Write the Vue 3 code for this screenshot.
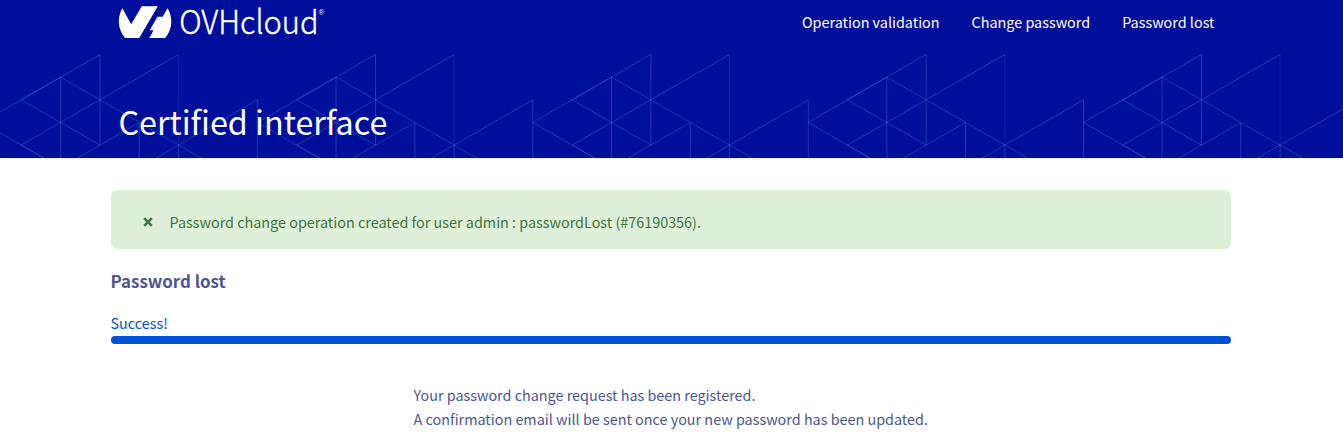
<script setup>
const links = ['Operation validation', 'Change password', 'Password lost']

const U = 39.35
const pt = ([c, r]) => `${(c * U).toFixed(2)},${(54.5 + r * 22.65).toFixed(2)}`
const path = (segments) => segments.map(([a, b]) => `M${pt(a)}L${pt(b)}`).join('')

const lines = path([
  [[0, 3], [3, 0]],
  [[3, 0], [3, 4]],
  [[2, 1], [2, 5]],
  [[2, 1], [6, 5]],
  [[1, 2], [3, 4]],
  [[1, 4], [5, 0]],
  [[0, 3], [2, 5]],
  [[4, 3], [4, 5]],
  [[4, 3], [2, 5]],
  [[4, 5], [7, 2]],
  [[5, 4], [5, 5]],
  [[7, 2], [7, 5]]
])
const bright = path([[[1, 2], [2, 1]], [[1, 4], [2, 5]]])
const faint = path([[[5, 0], [5, 4]]])
const tiles = [-18.1, 257.4, 532.8, 808.1, 1083.4, 1358.8]
</script>

<template>
  <div class="page">
    <header class="hero">
      <svg class="pattern" width="1343" height="158" viewBox="0 0 1343 158" fill="none" aria-hidden="true">
        <g v-for="x in tiles" :key="x" :transform="`translate(${x} 0)`">
          <path class="line" :d="lines" />
          <path class="bright" :d="bright" />
          <path class="faint" :d="faint" />
        </g>
      </svg>
      <div class="topbar">
        <svg class="logo" width="210" height="36" viewBox="116 4 210 36">
          <path fill="#fff" d="M122.300 8.300 131.200 24.300 141.800 6.200H157.800L139.200 38H125C117.500 29 117.200 17.500 122.300 8.300Z" />
          <path fill="#fff" d="M167.600 8.300C173 17.500 172.800 29 165.200 38H149.300L153.600 30.200H149.800L157.400 16.800H162.700L167.600 8.300Z" />
          <text class="brand" x="179.300" y="34.300" textLength="139.300" lengthAdjust="spacingAndGlyphs">OVHcloud</text>
          <text class="reg" x="318.800" y="15">®</text>
        </svg>
        <nav class="nav">
          <a v-for="l in links" :key="l">{{ l }}</a>
        </nav>
      </div>
      <h1>Certified interface</h1>
    </header>
    <main>
      <div class="alert">
        <svg class="close" width="10" height="10" viewBox="0 0 10 10"><path d="M1.200 1.200 8.800 8.800M8.800 1.200 1.200 8.800" stroke="#3c763d" stroke-width="2.600" /></svg>
        <span>Password change operation created for user admin : passwordLost (#76190356).</span>
      </div>
      <h2>Password lost</h2>
      <p class="status">Success!</p>
      <div class="bar"></div>
      <div class="message">
        <p>Your password change request has been registered.</p>
        <p>A confirmation email will be sent once your new password has been updated.</p>
      </div>
    </main>
  </div>
</template>

<style>
html, body { margin: 0; background: #fff; overflow: hidden; }
</style>

<style scoped>
.page {
  width: 1343px;
  height: 438px;
  overflow: hidden;
  font-family: "Noto Sans CJK SC", "Noto Sans", sans-serif;
  font-size: 14.38px;
  line-height: 24px;
  color: #4d5592;
}
h1, h2, p { margin: 0; }
.hero { position: relative; height: 158px; background: #000e9c; color: #fff; box-shadow: 0 1px 3px rgba(90, 60, 220, .1); }
.pattern { position: absolute; left: 0; top: 0; }
.line { stroke: #3c78d6; stroke-opacity: .42; }
.bright { stroke: #5090e0; stroke-opacity: .25; }
.faint { stroke: #3c78d6; stroke-opacity: .2; }
.topbar { position: relative; display: flex; justify-content: space-between; padding: 4px 128.500px 0 116px; height: 42px; }
.logo { overflow: visible; }
.brand { fill: #fff; stroke: #fff; stroke-width: .4px; font: 300 32.500px "Noto Sans CJK SC", sans-serif; }
.reg { fill: #fff; font: 7px "Liberation Sans", sans-serif; }
.nav { display: flex; gap: 32px; padding-top: 6px; }
h1 { position: relative; margin: 51px 0 0 118.500px; font-size: 32.300px; font-weight: 400; line-height: 48px; }
main { width: 1120px; margin: 32px 0 0 110.500px; }
.alert { display: flex; align-items: center; box-sizing: border-box; height: 59px; padding: 5px 31px 0 32px; border-radius: 6px; background: #dff0d8; color: #3c763d; }
.close { margin-right: 17px; }
h2 { margin-top: 20px; font-size: 16.900px; line-height: 24px; }
.status { margin-top: 18px; color: #0050d7; }
.bar { height: 8px; margin-top: 1px; border-radius: 4px; background: #0050d7; }
.message { margin: 39px 0 0 303px; }
</style>
